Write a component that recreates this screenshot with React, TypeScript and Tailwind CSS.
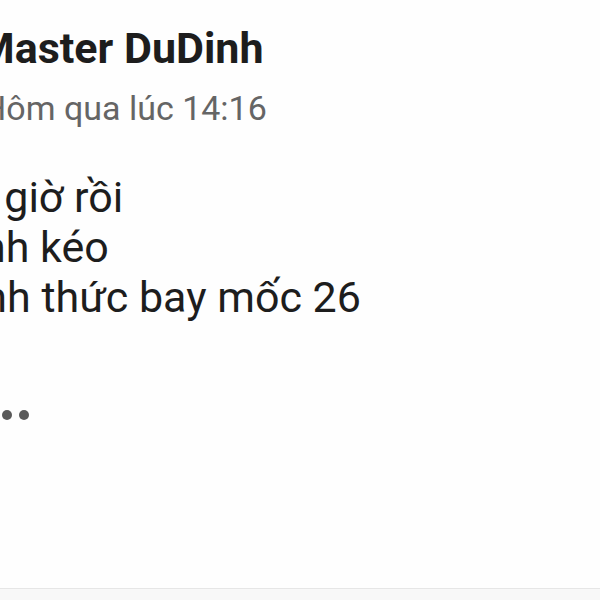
export default function App() {
  return (
    <div
      className="w-[600px] h-[600px] overflow-hidden bg-[#fefefe] flex flex-col"
      style={{ fontFamily: "Roboto, 'Noto Sans', sans-serif" }}
    >
      {/* Header */}
      <div className="pt-[22px] flex flex-col">
        <div className="ml-[-23px] text-[43px] leading-[52px] font-bold text-[#1d1d1d] whitespace-nowrap">
          Master DuDinh
        </div>
        <div className="ml-[-18px] mt-[14px] text-[34px] leading-[40px] text-[#656565] whitespace-nowrap">
          Hôm qua lúc 14:16
        </div>
      </div>

      {/* Body */}
      <div className="ml-[-79px] mt-[44px] text-[43px] leading-[50px] text-[#1d1d1d] whitespace-nowrap">
        <div>Mới giờ rồi</div>
        <div>Mạnh kéo</div>
        <div>Chính thức bay mốc 26</div>
      </div>

      {/* More */}
      <div className="ml-[-15px] mt-[88px] flex gap-[7px]">
        <span className="w-[10px] h-[10px] rounded-full bg-[#595959]" />
        <span className="w-[10px] h-[10px] rounded-full bg-[#595959]" />
        <span className="w-[10px] h-[10px] rounded-full bg-[#595959]" />
      </div>

      <div className="flex-1" />
      <div className="h-[12px] border-t border-[#e6e6e6] bg-[#f8f8f8]" />
    </div>
  );
}
